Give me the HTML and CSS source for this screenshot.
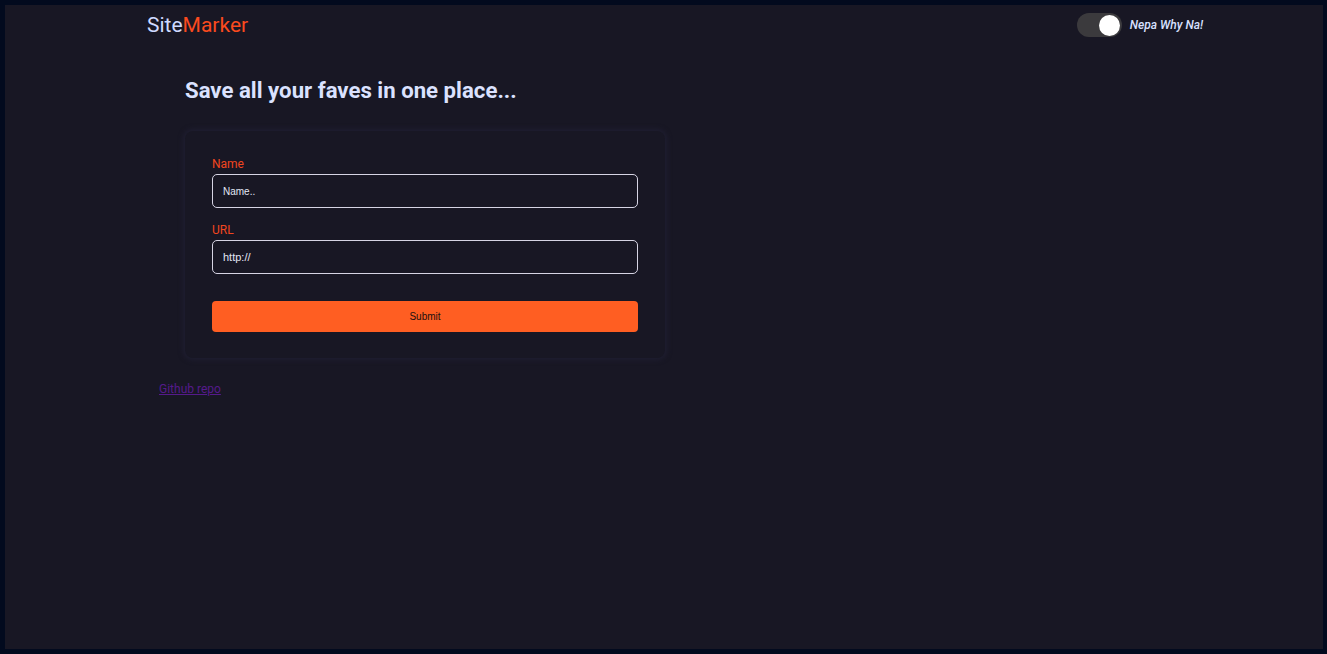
FILE: index.html
```html
<!DOCTYPE html>
<html lang="en">
<head>
<meta charset="utf-8">
<title>SiteMarker</title>
<link rel="stylesheet" href="styles.css">
</head>
<body>
<div class="app">
  <header class="header">
    <div class="logo"><span class="logo-site">Site</span><span class="logo-marker">Marker</span></div>
    <div class="theme">
      <span class="toggle"><span class="knob"></span></span>
      <span class="theme-label">Nepa Why Na!</span>
    </div>
  </header>
  <main class="main">
    <h1 class="title">Save all your faves in one place...</h1>
    <form class="card">
      <label class="label">Name</label>
      <div class="input name-input">Name..</div>
      <label class="label">URL</label>
      <div class="input url-input">http://</div>
      <div class="button">Submit</div>
    </form>
  </main>
  <a class="repo" href="#">Github repo</a>
</div>
</body>
</html>
```
FILE: styles.css
```css
html, body {
  margin: 0;
  padding: 0;
}
body {
  background: #020a1e;
  width: 1327px;
  height: 654px;
  overflow: hidden;
}
.app {
  margin: 5px 4px 0 5px;
  height: 644px;
  background: #181724;
  font-family: Roboto, "Liberation Sans", sans-serif;
  display: flex;
  flex-direction: column;
}
.header {
  display: flex;
  justify-content: space-between;
  align-items: center;
  padding: 5px 120px 0 142px;
  height: 30px;
}
.logo {
  font-size: 21px;
  line-height: 24px;
}
.logo-site { color: #cfdaff; }
.logo-marker { color: #fb4a1e; }
.theme {
  display: flex;
  align-items: center;
  gap: 8px;
}
.toggle {
  width: 45px;
  height: 24px;
  border-radius: 12px;
  background: #3b3a3d;
  display: flex;
  align-items: center;
  justify-content: flex-end;
  padding: 0 2px;
  box-sizing: border-box;
}
.knob {
  width: 21px;
  height: 21px;
  border-radius: 50%;
  background: #ffffff;
}
.theme-label {
  color: #d7e0ff;
  font-style: italic;
  font-weight: 500;
  font-size: 12px;
}
.main {
  padding: 36px 0 0 180px;
}
.title {
  margin: 0;
  color: #dbe2ff;
  font-size: 22.2px;
  font-weight: 700;
  line-height: 28px;
}
.card {
  margin-top: 27px;
  width: 480px;
  box-sizing: border-box;
  padding: 25px 27px 26px 27px;
  border-radius: 8px;
  background: #181724;
  box-shadow: 0 0 5px 2px #1f1e31;
  display: flex;
  flex-direction: column;
}
.label {
  color: #f2461f;
  font-size: 12px;
  line-height: 16px;
  margin-bottom: 2px;
}
.input {
  height: 34px;
  box-sizing: border-box;
  border: 1px solid #d6d4e4;
  border-radius: 5px;
  padding: 0 10px;
  display: flex;
  align-items: center;
  color: #e2e6f5;
  font-family: "Liberation Sans", Arial, sans-serif;
  margin-bottom: 14px;
}
.name-input { font-size: 10px; }
.url-input {
  font-size: 11px;
  margin-bottom: 27px;
}
.button {
  height: 31px;
  border-radius: 4px;
  background: #ff5e22;
  color: #1b1010;
  font-family: "Liberation Sans", Arial, sans-serif;
  font-size: 10px;
  display: flex;
  align-items: center;
  justify-content: center;
}
.repo {
  margin: 23px 0 0 154px;
  align-self: flex-start;
  color: #551a8b;
  font-size: 12px;
  line-height: 16px;
}
```
